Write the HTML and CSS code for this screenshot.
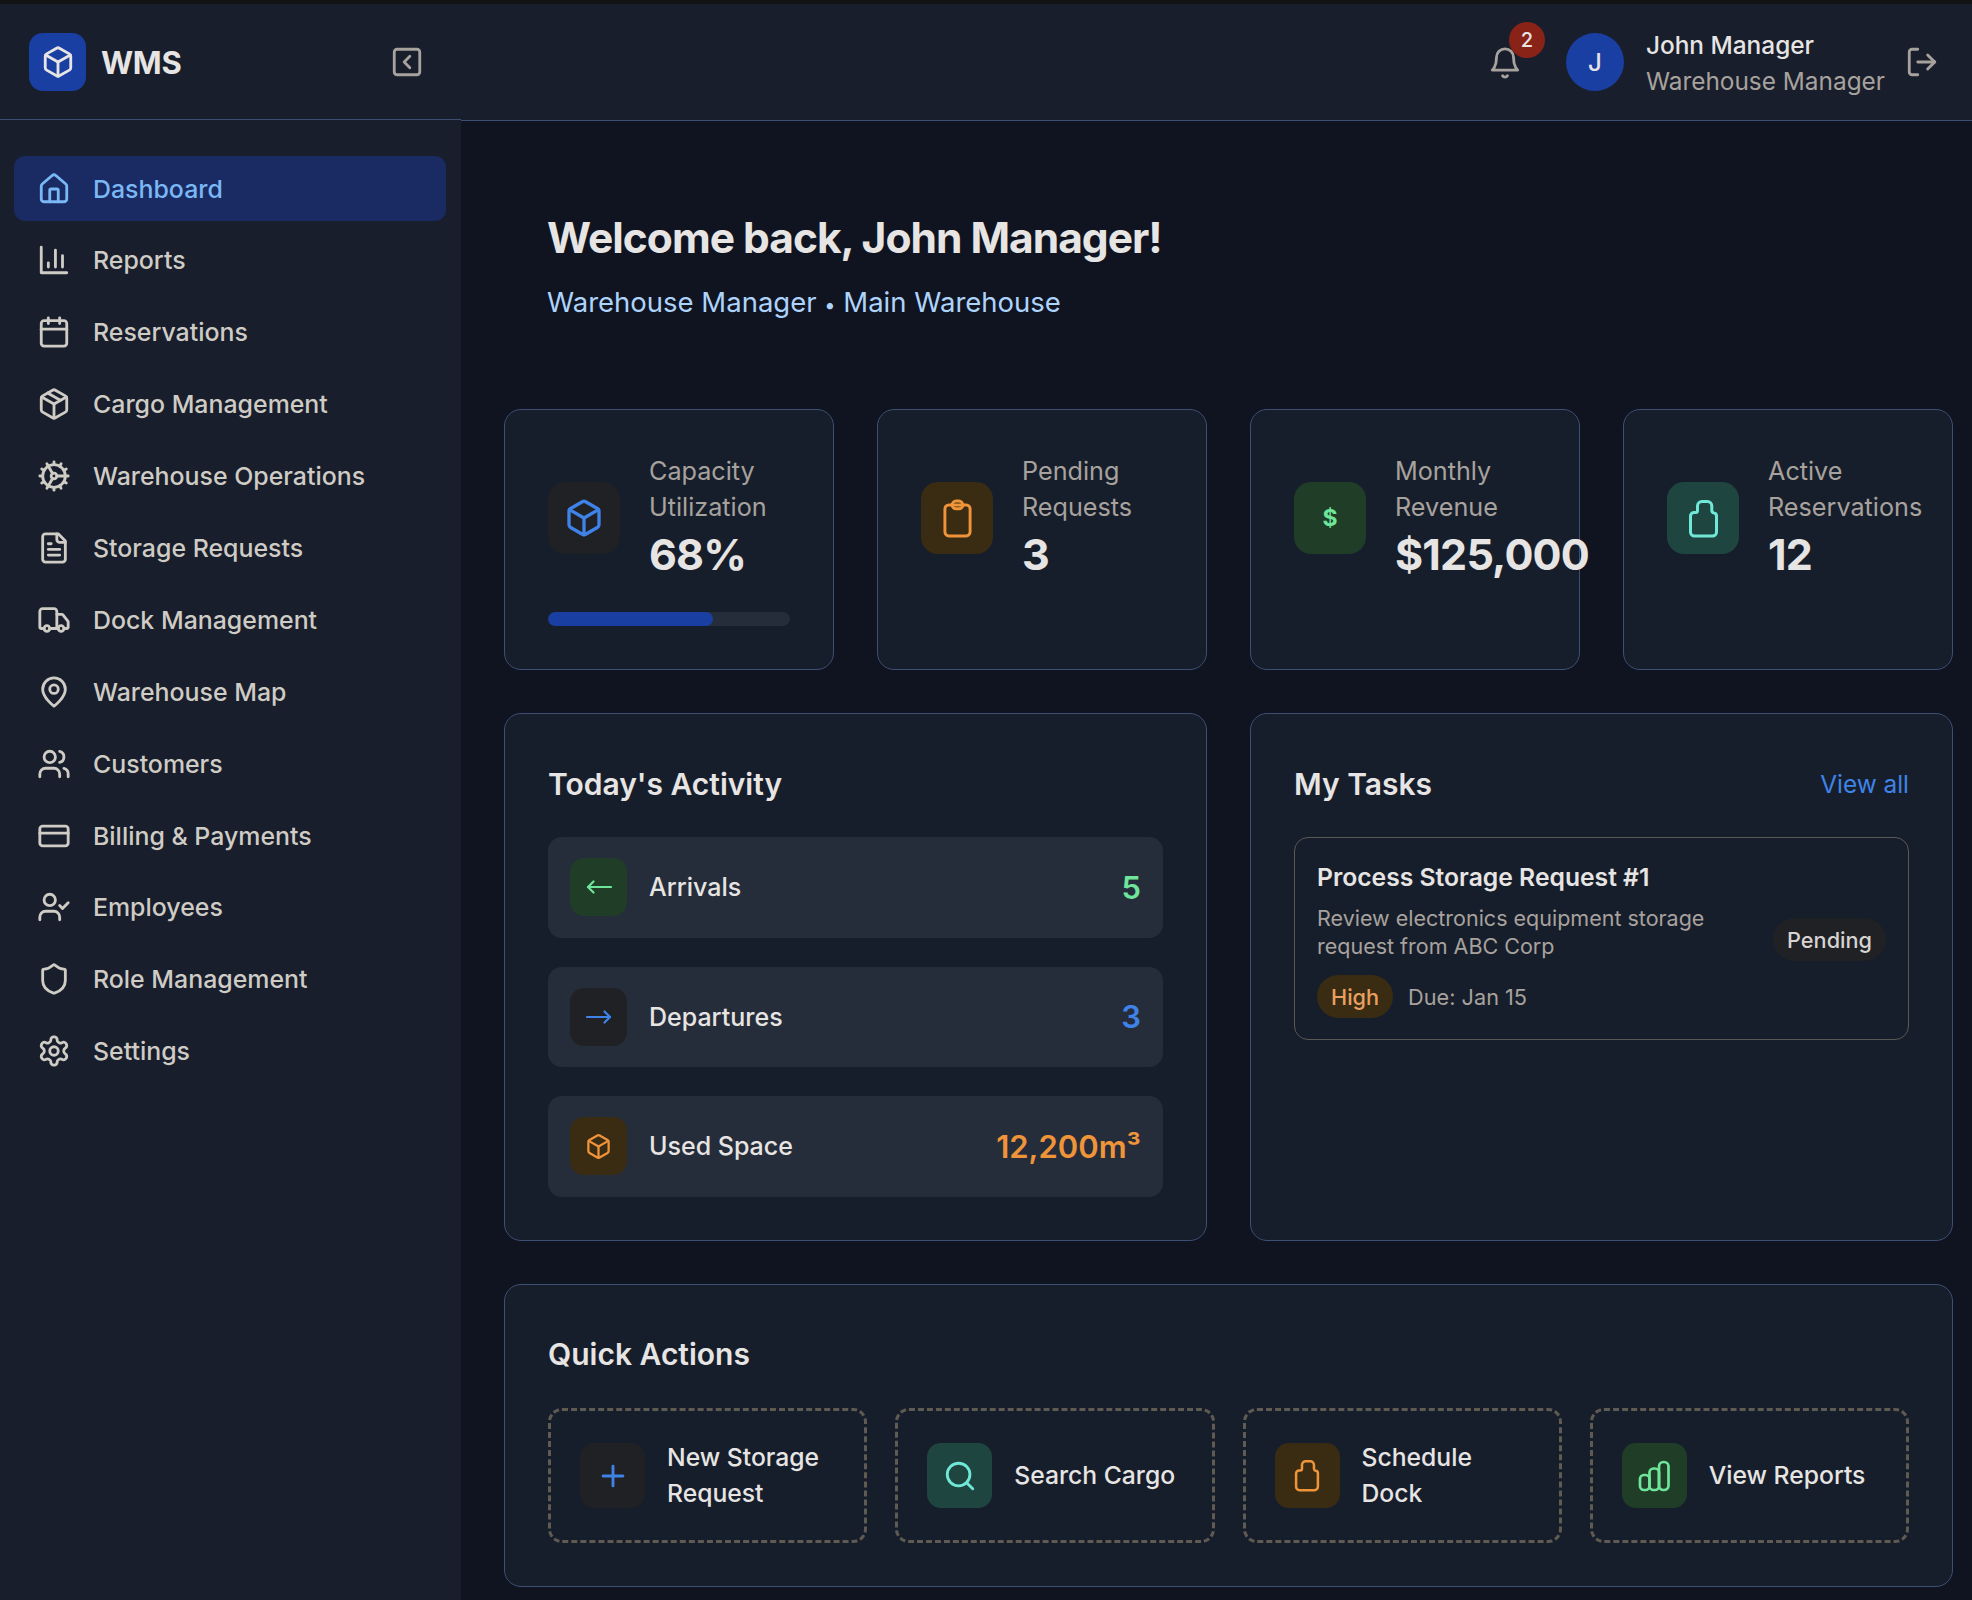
FILE: index.html
```html
<!DOCTYPE html>
<html lang="en">
<head>
	<meta charset="UTF-8">
	<title>WMS Dashboard</title>
	<link rel="stylesheet" href="styles.css">
</head>
<body>
	<svg class="sprite" width="0" height="0">
		<symbol id="i-box" viewBox="0 0 24 24"><path d="M21 8a2 2 0 0 0-1-1.73l-7-4a2 2 0 0 0-2 0l-7 4A2 2 0 0 0 3 8v8a2 2 0 0 0 1 1.73l7 4a2 2 0 0 0 2 0l7-4A2 2 0 0 0 21 16Z"/><path d="m3.3 7 8.7 5 8.7-5"/><path d="M12 22V12"/></symbol>
		<symbol id="i-bottle" viewBox="0 0 31 39"><path d="M9.5 11.5V7A4.5 4.5 0 0 1 14 2.5h5.3a4.5 4.5 0 0 1 4.5 4.5v4.5a2.5 2.5 0 0 0 2 2.4 3 3 0 0 1 2.7 3V33a4 4 0 0 1-4 4H6.5a4 4 0 0 1-4-4V17A3.5 3.5 0 0 1 6 13.5h1.5a2 2 0 0 0 2-2z"/></symbol>
	</svg>
	<div class="topstrip"></div>
	<div class="app">
		<aside class="sidebar">
			<div class="brand">
				<div class="logo"><svg class="ic"><use href="#i-box"/></svg></div>
				<span class="brand-name">WMS</span>
				<svg class="ic collapse" viewBox="0 0 24 24"><rect x="3" y="3" width="18" height="18" rx="2"/><path d="m14 16-4-4 4-4"/></svg>
			</div>
			<ul class="nav">
				<li class="selected"><svg class="ic" viewBox="0 0 24 24"><path d="M15 21v-8a1 1 0 0 0-1-1h-4a1 1 0 0 0-1 1v8"/><path d="M3 10a2 2 0 0 1 .709-1.528l7-5.999a2 2 0 0 1 2.582 0l7 5.999A2 2 0 0 1 21 10v9a2 2 0 0 1-2 2H5a2 2 0 0 1-2-2z"/></svg>Dashboard</li>
				<li><svg class="ic" viewBox="0 0 24 24"><path d="M3 3v18h18"/><path d="M18 17V9"/><path d="M13 17V5"/><path d="M8 17v-3"/></svg>Reports</li>
				<li><svg class="ic" viewBox="0 0 24 24"><path d="M8 2v4"/><path d="M16 2v4"/><rect x="3" y="4" width="18" height="18" rx="2"/><path d="M3 10h18"/></svg>Reservations</li>
				<li><svg class="ic" viewBox="0 0 24 24"><path d="M11 21.73a2 2 0 0 0 2 0l7-4A2 2 0 0 0 21 16V8a2 2 0 0 0-1-1.73l-7-4a2 2 0 0 0-2 0l-7 4A2 2 0 0 0 3 8v8a2 2 0 0 0 1 1.73z"/><path d="M12 22V12"/><path d="M3.29 7 12 12l8.71-5"/><path d="m7.5 4.27 9 5.15"/></svg>Cargo Management</li>
				<li><svg class="ic" viewBox="0 0 24 24"><path d="M12 20a8 8 0 1 0 0-16 8 8 0 0 0 0 16Z"/><path d="M12 14a2 2 0 1 0 0-4 2 2 0 0 0 0 4Z"/><path d="M12 2v2"/><path d="M12 22v-2"/><path d="m17 20.66-1-1.73"/><path d="M11 10.27 7 3.34"/><path d="m20.66 17-1.73-1"/><path d="m3.34 7 1.73 1"/><path d="M14 12h8"/><path d="M2 12h2"/><path d="m20.66 7-1.73 1"/><path d="m3.34 17 1.73-1"/><path d="m17 3.34-1 1.73"/><path d="m11 13.73-4 6.93"/></svg>Warehouse Operations</li>
				<li><svg class="ic" viewBox="0 0 24 24"><path d="M15 2H6a2 2 0 0 0-2 2v16a2 2 0 0 0 2 2h12a2 2 0 0 0 2-2V7Z"/><path d="M14 2v4a2 2 0 0 0 2 2h4"/><path d="M10 9H8"/><path d="M16 13H8"/><path d="M16 17H8"/></svg>Storage Requests</li>
				<li><svg class="ic" viewBox="0 0 24 24"><path d="M14 18V6a2 2 0 0 0-2-2H4a2 2 0 0 0-2 2v11a1 1 0 0 0 1 1h2"/><path d="M15 18H9"/><path d="M19 18h2a1 1 0 0 0 1-1v-3.65a1 1 0 0 0-.22-.624l-3.48-4.35A1 1 0 0 0 17.52 8H14"/><circle cx="17" cy="18" r="2"/><circle cx="7" cy="18" r="2"/></svg>Dock Management</li>
				<li><svg class="ic" viewBox="0 0 24 24"><path d="M20 10c0 6-8 12-8 12s-8-6-8-12a8 8 0 0 1 16 0Z"/><circle cx="12" cy="10" r="3"/></svg>Warehouse Map</li>
				<li><svg class="ic" viewBox="0 0 24 24"><path d="M16 21v-2a4 4 0 0 0-4-4H6a4 4 0 0 0-4 4v2"/><circle cx="9" cy="7" r="4"/><path d="M22 21v-2a4 4 0 0 0-3-3.87"/><path d="M16 3.13a4 4 0 0 1 0 7.75"/></svg>Customers</li>
				<li><svg class="ic" viewBox="0 0 24 24"><rect x="2" y="5" width="20" height="14" rx="2"/><path d="M2 10h20"/></svg>Billing &amp; Payments</li>
				<li><svg class="ic" viewBox="0 0 24 24"><path d="M16 21v-2a4 4 0 0 0-4-4H6a4 4 0 0 0-4 4v2"/><circle cx="9" cy="7" r="4"/><path d="m16 11 2 2 4-4"/></svg>Employees</li>
				<li><svg class="ic" viewBox="0 0 24 24"><path d="M20 13c0 5-3.5 7.5-7.66 8.95a1 1 0 0 1-.67-.01C7.5 20.5 4 18 4 13V6a1 1 0 0 1 1-1c2 0 4.5-1.2 6.24-2.72a1.17 1.17 0 0 1 1.52 0C14.51 3.81 17 5 19 5a1 1 0 0 1 1 1z"/></svg>Role Management</li>
				<li><svg class="ic" viewBox="0 0 24 24"><path d="M12.22 2h-.44a2 2 0 0 0-2 2v.18a2 2 0 0 1-1 1.73l-.43.25a2 2 0 0 1-2 0l-.15-.08a2 2 0 0 0-2.73.73l-.22.38a2 2 0 0 0 .73 2.73l.15.1a2 2 0 0 1 1 1.72v.51a2 2 0 0 1-1 1.74l-.15.09a2 2 0 0 0-.73 2.73l.22.38a2 2 0 0 0 2.73.73l.15-.08a2 2 0 0 1 2 0l.43.25a2 2 0 0 1 1 1.73V20a2 2 0 0 0 2 2h.44a2 2 0 0 0 2-2v-.18a2 2 0 0 1 1-1.73l.43-.25a2 2 0 0 1 2 0l.15.08a2 2 0 0 0 2.73-.73l.22-.39a2 2 0 0 0-.73-2.73l-.15-.08a2 2 0 0 1-1-1.74v-.5a2 2 0 0 1 1-1.74l.15-.09a2 2 0 0 0 .73-2.73l-.22-.38a2 2 0 0 0-2.73-.73l-.15.08a2 2 0 0 1-2 0l-.43-.25a2 2 0 0 1-1-1.73V4a2 2 0 0 0-2-2z"/><circle cx="12" cy="12" r="3"/></svg>Settings</li>
			</ul>
		</aside>
		<div class="page">
			<header class="topbar">
				<div class="bell">
					<svg class="ic" viewBox="0 0 24 24"><path d="M6 8a6 6 0 0 1 12 0c0 7 3 9 3 9H3s3-2 3-9"/><path d="M10.3 21a1.94 1.94 0 0 0 3.4 0"/></svg>
					<span class="badge">2</span>
				</div>
				<div class="avatar">J</div>
				<div class="user">
					<div class="user-name">John Manager</div>
					<div class="user-role">Warehouse Manager</div>
				</div>
				<svg class="ic logout" viewBox="0 0 24 24"><path d="M9 21H5a2 2 0 0 1-2-2V5a2 2 0 0 1 2-2h4"/><path d="m16 17 5-5-5-5"/><path d="M21 12H9"/></svg>
			</header>
			<main class="content">
				<section class="welcome">
					<h1>Welcome back, John Manager!</h1>
					<p>Warehouse Manager <span class="dot">•</span> Main Warehouse</p>
				</section>
				<section class="stats">
					<div class="card stat">
						<div class="stat-top">
							<div class="tile blue"><svg class="ic big"><use href="#i-box"/></svg></div>
							<div class="stat-text">
								<div class="stat-label">Capacity Utilization</div>
								<div class="stat-value">68%</div>
							</div>
						</div>
						<div class="bar"><div class="bar-fill" style="width:68%"></div></div>
					</div>
					<div class="card stat">
						<div class="stat-top">
							<div class="tile orange"><svg class="ic clip" viewBox="0 0 32 40"><rect x="3" y="6" width="26" height="32" rx="4"/><rect x="10.5" y="2" width="11" height="8" rx="4"/></svg></div>
							<div class="stat-text">
								<div class="stat-label">Pending Requests</div>
								<div class="stat-value">3</div>
							</div>
						</div>
					</div>
					<div class="card stat">
						<div class="stat-top">
							<div class="tile green"><span class="dollar">$</span></div>
							<div class="stat-text">
								<div class="stat-label">Monthly Revenue</div>
								<div class="stat-value">$125,000</div>
							</div>
						</div>
					</div>
					<div class="card stat">
						<div class="stat-top">
							<div class="tile teal"><svg class="ic bottle"><use href="#i-bottle"/></svg></div>
							<div class="stat-text">
								<div class="stat-label">Active Reservations</div>
								<div class="stat-value">12</div>
							</div>
						</div>
					</div>
				</section>
				<section class="middle">
					<div class="card panel">
						<h2>Today's Activity</h2>
						<div class="rows">
							<div class="row">
								<div class="tile small green"><svg class="ic arrow" viewBox="0 0 26 14"><path d="M25 7H2"/><path d="M7.5 1.5 2 7l5.5 5.5"/></svg></div>
								<span class="row-label">Arrivals</span>
								<span class="row-value c-green">5</span>
							</div>
							<div class="row">
								<div class="tile small blue"><svg class="ic arrow" viewBox="0 0 26 14"><path d="M1 7h23"/><path d="M18.5 1.5 24 7l-5.5 5.5"/></svg></div>
								<span class="row-label">Departures</span>
								<span class="row-value c-blue">3</span>
							</div>
							<div class="row">
								<div class="tile small orange"><svg class="ic tiny"><use href="#i-box"/></svg></div>
								<span class="row-label">Used Space</span>
								<span class="row-value c-orange">12,200m³</span>
							</div>
						</div>
					</div>
					<div class="card panel">
						<div class="panel-head">
							<h2>My Tasks</h2>
							<span class="view-all">View all</span>
						</div>
						<div class="task">
							<div class="task-main">
								<div class="task-title">Process Storage Request #1</div>
								<div class="task-desc">Review electronics equipment storage request from ABC Corp</div>
								<div class="task-meta">
									<span class="pill high">High</span>
									<span class="due">Due: Jan 15</span>
								</div>
							</div>
							<span class="pill pending">Pending</span>
						</div>
					</div>
				</section>
				<section class="card panel quick">
					<h2>Quick Actions</h2>
					<div class="actions">
						<div class="action">
							<div class="tile mid blue"><svg class="ic" viewBox="0 0 24 24"><path d="M5 12h14"/><path d="M12 5v14"/></svg></div>
							<span>New Storage Request</span>
						</div>
						<div class="action">
							<div class="tile mid teal"><svg class="ic" viewBox="0 0 24 24"><circle cx="11" cy="11" r="8"/><path d="m21 21-4.3-4.3"/></svg></div>
							<span>Search Cargo</span>
						</div>
						<div class="action">
							<div class="tile mid orange"><svg class="ic bottle"><use href="#i-bottle"/></svg></div>
							<span>Schedule Dock</span>
						</div>
						<div class="action">
							<div class="tile mid green"><svg class="ic bars" viewBox="0 0 32 32"><rect x="2" y="15" width="9.5" height="15" rx="4"/><rect x="11.5" y="8.5" width="9.5" height="21.5" rx="4"/><rect x="21" y="2" width="9.5" height="28" rx="4.5"/></svg></div>
							<span>View Reports</span>
						</div>
					</div>
				</section>
			</main>
		</div>
	</div>
</body>
</html>
```

FILE: styles.css
```css
*{
	margin: 0;
	padding: 0;
	box-sizing: border-box;
}
ul{
	list-style: none;
}
html, body{
	height: 1600px;
	overflow: hidden;
}
body{
	background: #0f1420;
	color: #e7e5e4;
	font-family: Inter, "Noto Sans", sans-serif;
	font-size: 25px;
}
.sprite{
	display: block;
}
.topstrip{
	height: 4px;
	background: #111315;
}
.app{
	display: flex;
	height: 1596px;
}
.ic{
	width: 34px;
	height: 34px;
	flex: none;
	fill: none;
	stroke: currentColor;
	stroke-width: 2;
	stroke-linecap: round;
	stroke-linejoin: round;
}

/* sidebar */
.sidebar{
	width: 461px;
	flex: none;
	background: #181e2b;
}
.brand{
	height: 116px;
	display: flex;
	align-items: center;
	padding: 0 37px 0 29px;
	border-bottom: 1px solid #3d4f73;
}
.logo{
	width: 57px;
	height: 58px;
	border-radius: 14px;
	background: #1a3fa3;
	color: #e7e5e4;
	display: flex;
	align-items: center;
	justify-content: center;
}
.brand-name{
	margin-left: 15px;
	margin-top: 2px;
	font-size: 31px;
	font-weight: 700;
	letter-spacing: -0.3px;
}
.collapse{
	margin-left: auto;
	color: #a8a29e;
}
.nav{
	padding: 36px 15px 0 14px;
}
.nav li{
	height: 65px;
	margin-bottom: 6.9px;
	padding-left: 23px;
	border-radius: 11px;
	display: flex;
	align-items: center;
	gap: 22px;
	font-size: 24.9px;
	font-weight: 500;
	color: #cfcbc5;
	white-space: nowrap;
}
.nav .selected{
	background: #1a2a62;
	color: #7ab8f5;
}

/* top bar */
.page{
	flex: 1;
	min-width: 0;
}
.topbar{
	height: 117px;
	background: #181e2b;
	border-bottom: 1px solid #3d4f73;
	display: flex;
	align-items: center;
	padding: 0 33px 0 0;
	justify-content: flex-end;
}
.bell{
	position: relative;
	color: #a8a29e;
	margin-top: 2px;
	margin-right: 44px;
	display: flex;
}
.badge{
	position: absolute;
	left: 21px;
	top: -24px;
	width: 36px;
	height: 36px;
	border-radius: 50%;
	background: #8a2317;
	color: #e7e5e4;
	font-size: 20px;
	font-weight: 500;
	display: flex;
	align-items: center;
	justify-content: center;
}
.avatar{
	width: 58px;
	height: 58px;
	border-radius: 50%;
	background: #1a3fa3;
	display: flex;
	align-items: center;
	justify-content: center;
	font-size: 24px;
	font-weight: 500;
	margin-right: 22px;
}
.user{
	font-size: 24.4px;
	padding-top: 2px;
}
.user-name{
	font-weight: 500;
	line-height: 36px;
}
.user-role{
	color: #a8a29e;
	line-height: 36px;
}
.logout{
	margin-left: 20px;
	color: #a8a29e;
}

/* content */
.content{
	padding: 0 19px 0 43px;
}
.welcome{
	padding: 91px 0 0 43px;
	height: 288px;
}
.welcome h1{
	font-size: 42.5px;
	font-weight: 700;
	line-height: 52px;
	letter-spacing: -1px;
}
.welcome p{
	margin-top: 18px;
	font-size: 27.5px;
	line-height: 40px;
	color: #aed3fb;
}
.dot{
	font-size: 20px;
}
.card{
	background: #171e2b;
	border: 1px solid #3d4f73;
	border-radius: 17px;
}
.stats{
	display: grid;
	grid-template-columns: repeat(4, 1fr);
	gap: 43px;
}
.stat{
	height: 261px;
	padding: 43px;
	min-width: 0;
}
.stat-top{
	display: flex;
	align-items: center;
	gap: 29px;
}
.stat-text{
	flex: 1;
	min-width: 0;
}
.tile{
	width: 72px;
	height: 72px;
	flex: none;
	border-radius: 17px;
	display: flex;
	align-items: center;
	justify-content: center;
}
.tile.small{
	width: 57px;
	height: 58px;
	border-radius: 14px;
}
.tile.mid{
	width: 65px;
	height: 65px;
	border-radius: 14px;
}
.blue{
	background: #1f2125;
	color: #3f83e8;
}
.orange{
	background: #3a2c12;
	color: #f0943a;
}
.green{
	background: #1f3d27;
	color: #6ee59a;
}
.teal{
	background: #1f4540;
	color: #6fe8d8;
}
.ic.big{
	width: 40px;
	height: 40px;
}
.ic.tiny{
	width: 27px;
	height: 27px;
}
.ic.clip, .ic.bottle{
	width: 31px;
	height: 39px;
	stroke-width: 3;
}
.mid .ic.bottle{
	width: 26px;
	height: 33px;
}
.ic.arrow{
	width: 26px;
	height: 14px;
	stroke-width: 2.2;
}
.ic.bars{
	width: 32px;
	height: 32px;
	stroke-width: 2.7;
}
.dollar{
	font-size: 23px;
	font-weight: 700;
}
.stat-label{
	font-size: 25.2px;
	color: #a8a29e;
	line-height: 36px;
}
.stat-value{
	font-size: 43px;
	font-weight: 700;
	line-height: 58px;
	letter-spacing: -0.8px;
	white-space: nowrap;
}
.bar{
	margin-top: 29px;
	height: 14px;
	border-radius: 7px;
	background: #262d3a;
	overflow: hidden;
}
.bar-fill{
	height: 100%;
	background: #1a3fa3;
	border-radius: 7px;
}
.middle{
	margin-top: 43px;
	display: grid;
	grid-template-columns: 703px 703px;
	gap: 43px;
}
.panel{
	height: 528px;
	padding: 43px;
}
h2{
	font-size: 30px;
	font-weight: 600;
	line-height: 54px;
}
.panel-head{
	display: flex;
	justify-content: space-between;
	align-items: center;
}
.view-all{
	font-size: 24.4px;
	color: #3f83e8;
}
.rows{
	margin-top: 26px;
	display: flex;
	flex-direction: column;
	gap: 29px;
}
.row{
	height: 100.5px;
	padding: 0 22px;
	background: #262d3a;
	border-radius: 14px;
	display: flex;
	align-items: center;
}
.row-label{
	margin-left: 22px;
	font-weight: 500;
}
.row-value{
	margin-left: auto;
	font-size: 31px;
	font-weight: 600;
}
.c-green{
	color: #6ee59a;
}
.c-blue{
	color: #3f83e8;
}
.c-orange{
	color: #f0943a;
}
.task{
	margin-top: 26px;
	height: 203px;
	padding: 0 22px;
	border: 1px solid #5a5853;
	border-radius: 14px;
	display: flex;
	align-items: center;
	gap: 22px;
}
.task-main{
	flex: 1;
}
.task-title{
	font-size: 24.7px;
	font-weight: 600;
	line-height: 36px;
}
.task-desc{
	margin-top: 9px;
	font-size: 21.5px;
	line-height: 28px;
	color: #a8a29e;
}
.task-meta{
	margin-top: 15px;
	display: flex;
	align-items: center;
	gap: 15px;
}
.pill{
	height: 43px;
	padding: 0 14px;
	border-radius: 22px;
	font-size: 21.7px;
	font-weight: 500;
	display: inline-flex;
	align-items: center;
	white-space: nowrap;
}
.pill.high{
	background: #3a2c12;
	color: #e8a060;
}
.pill.pending{
	margin-top: 2px;
	background: #1f2125;
	color: #d6d3d1;
}
.due{
	font-size: 21.7px;
	color: #a8a29e;
}
.quick{
	margin-top: 43px;
	height: 303px;
}
.quick h2{
	margin-top: -1px;
}
.actions{
	margin-top: 27px;
	display: grid;
	grid-template-columns: repeat(4, 1fr);
	gap: 28px;
}
.action{
	height: 135px;
	padding: 0 29px;
	border: 3px dashed #5f5a52;
	border-radius: 14px;
	display: flex;
	align-items: center;
	gap: 22px;
	font-size: 24.7px;
	font-weight: 500;
	line-height: 36px;
}
.action span{
	margin-top: -2px;
}
```
